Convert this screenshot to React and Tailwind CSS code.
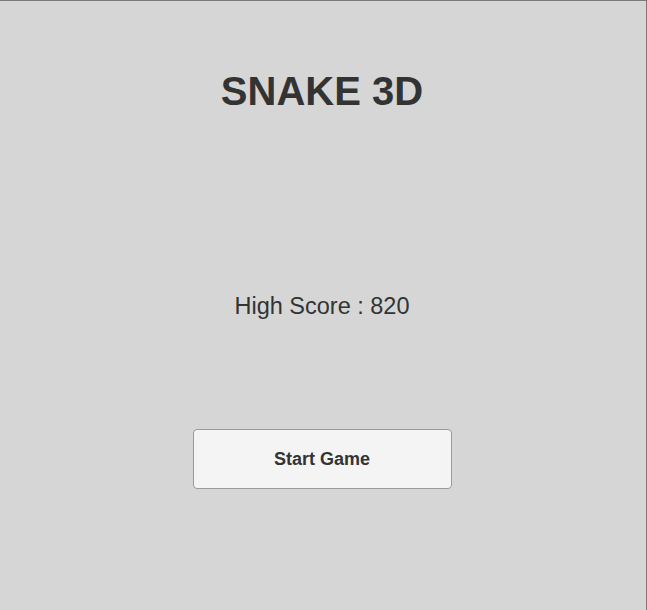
export default function App() {
    return (
        <div
            className="flex h-[610px] w-[647px] flex-col items-center border-t border-r border-[#7a7a7a] bg-[#d6d6d6] pr-[2px] text-[#333333]"
            style={{ fontFamily: '"Liberation Sans", Arial, sans-serif' }}
        >
            <h1 className="mt-[70px] text-[40px] font-bold leading-none">
                SNAKE 3D
            </h1>

            <p className="mt-[183px] text-[23.5px] leading-[24px]">High Score : 820</p>

            <button className="mt-[111px] flex h-[60px] w-[259px] items-center justify-center rounded-[4px] border border-[#9a9a9a] bg-[#f4f4f4] text-[18px] font-bold leading-none text-[#333333]">
                Start Game
            </button>
        </div>
    )
}
